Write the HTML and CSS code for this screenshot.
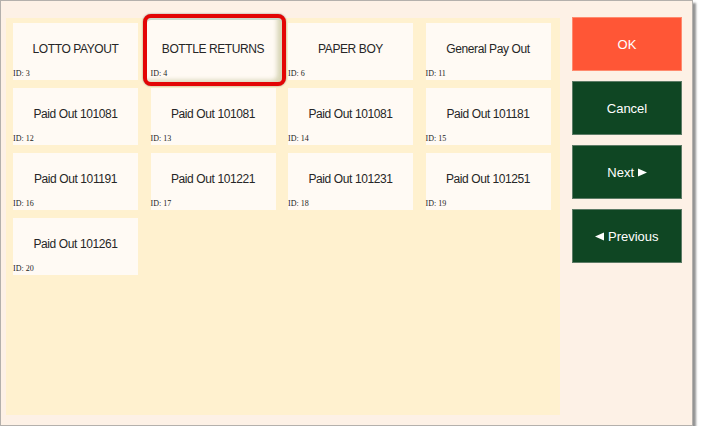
FILE: index.html
```html
<!DOCTYPE html>
<html lang="en">
<head>
<meta charset="utf-8">
<title>Paid Out</title>
<link rel="stylesheet" href="styles.css">
</head>
<body>
<div class="window">
  <div class="panel">
    <div class="grid">
      <div class="tile"><span class="name">LOTTO PAYOUT</span><span class="id">ID: 3</span></div>
      <div class="tile selected"><span class="name">BOTTLE RETURNS</span><span class="id">ID: 4</span></div>
      <div class="tile"><span class="name">PAPER BOY</span><span class="id">ID: 6</span></div>
      <div class="tile"><span class="name">General Pay Out</span><span class="id">ID: 11</span></div>
      <div class="tile"><span class="name">Paid Out 101081</span><span class="id">ID: 12</span></div>
      <div class="tile"><span class="name">Paid Out 101081</span><span class="id">ID: 13</span></div>
      <div class="tile"><span class="name">Paid Out 101081</span><span class="id">ID: 14</span></div>
      <div class="tile"><span class="name">Paid Out 101181</span><span class="id">ID: 15</span></div>
      <div class="tile"><span class="name">Paid Out 101191</span><span class="id">ID: 16</span></div>
      <div class="tile"><span class="name">Paid Out 101221</span><span class="id">ID: 17</span></div>
      <div class="tile"><span class="name">Paid Out 101231</span><span class="id">ID: 18</span></div>
      <div class="tile"><span class="name">Paid Out 101251</span><span class="id">ID: 19</span></div>
      <div class="tile"><span class="name">Paid Out 101261</span><span class="id">ID: 20</span></div>
    </div>
  </div>
  <div class="actions">
    <button class="btn ok">OK</button>
    <button class="btn dark">Cancel</button>
    <button class="btn dark">Next <svg class="arrow" width="9" height="9" viewBox="0 0 9 9"><path d="M0 0.5 L9 4.5 L0 8.5 Z" fill="#fff"/></svg></button>
    <button class="btn dark"><svg class="arrow" width="9" height="9" viewBox="0 0 9 9"><path d="M9 0.5 L0 4.5 L9 8.5 Z" fill="#fff"/></svg> Previous</button>
  </div>
</div>
</body>
</html>
```

FILE: styles.css
```css
html, body {
  margin: 0;
  padding: 0;
  background: #ffffff;
}

body {
  font-family: "Liberation Sans", "DejaVu Sans", sans-serif;
}

.window {
  width: 693px;
  height: 426px;
  box-sizing: border-box;
  border: 1px solid #b4b0ac;
  background: #fdf1e6;
  box-shadow: 3px 3px 2px rgba(60, 60, 60, 0.55);
  display: flex;
  padding: 16px 10px 10px 5px;
}

.panel {
  width: 554px;
  margin-top: 1px;
  background: #fff1cf;
  box-sizing: border-box;
  padding: 5px 7px;
}

.grid {
  display: grid;
  grid-template-columns: repeat(4, 125px);
  grid-auto-rows: 57px;
  column-gap: 12.5px;
  row-gap: 8px;
}

.tile {
  position: relative;
  background: #fffaf4;
  display: flex;
  align-items: center;
  justify-content: center;
  padding-bottom: 6px;
  box-sizing: border-box;
}

.tile .name {
  position: relative;
  z-index: 1;
  font-size: 12px;
  letter-spacing: -0.4px;
  color: #262626;
}

.tile .id {
  position: absolute;
  z-index: 1;
  left: 0;
  bottom: 2px;
  font-family: "Liberation Serif", "DejaVu Serif", serif;
  font-size: 8px;
  line-height: 8px;
  color: #222222;
}

.tile.selected::before {
  content: "";
  position: absolute;
  left: -8px;
  top: -9px;
  right: -10px;
  bottom: -6px;
  border: 4px solid #e30505;
  border-radius: 8px;
  background: #fffaf4;
  box-shadow: 0 0 2px rgba(0, 0, 0, 0.45),
              inset 0 2px 0 #c9d9cc,
              inset -6px -3px 4px -1px rgba(170, 170, 110, 0.45);
  z-index: 0;
}

.actions {
  width: 110px;
  margin-left: 12px;
  display: flex;
  flex-direction: column;
  gap: 10px;
}

.btn {
  height: 54px;
  width: 110px;
  border: 1px solid transparent;
  font-family: "Liberation Sans", "DejaVu Sans", sans-serif;
  font-size: 13px;
  color: #ffffff;
  padding: 0;
  margin: 0;
}

.btn .arrow {
  vertical-align: 0;
}

.btn.ok {
  background: #ff5636;
  border-color: #ff8a6e;
}

.btn.dark {
  background: #0f4623;
  border-color: #5d7b66;
}
```
